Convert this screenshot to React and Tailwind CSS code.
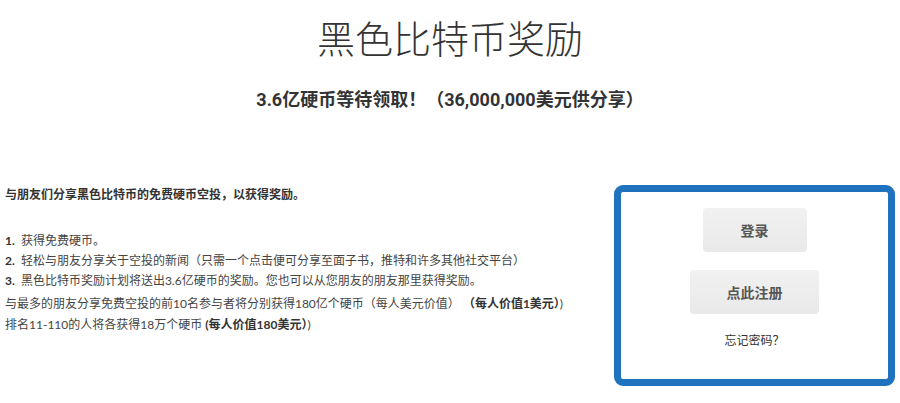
export default function App() {
  return (
    <div className="w-[900px] h-[403px] bg-white text-[#444] font-['Lato','Noto_Sans_CJK_SC',sans-serif] overflow-hidden">
      <h1 className="pt-[13px] text-center text-[38px] leading-[50px] font-light text-[#333]">黑色比特币奖励</h1>
      <h2 className="mt-[25px] text-center text-[18px] leading-[24px] font-bold text-[#333] font-['Roboto','Noto_Sans_CJK_SC',sans-serif]">
        3.6亿硬币等待领取！（36,000,000美元供分享）
      </h2>

      <div className="mt-[73px] flex justify-between pl-[5px] pr-[5px]">
        <div className="pt-[3px] text-[12px]">
          <p className="font-bold text-[#333] leading-[14px]">与朋友们分享黑色比特币的免费硬币空投，以获得奖励。</p>
          <div className="mt-[29px] leading-[20px]">
            <p><b className="text-[#333] mr-[3px]">1.</b> 获得免费硬币。</p>
            <p><b className="text-[#333] mr-[3px]">2.</b> 轻松与朋友分享关于空投的新闻（只需一个点击便可分享至面子书，推特和许多其他社交平台）</p>
            <p><b className="text-[#333] mr-[3px]">3.</b> 黑色比特币奖励计划将送出3.6亿硬币的奖励。您也可以从您朋友的朋友那里获得奖励。</p>
          </div>
          <div className="mt-[2px] leading-[21px]">
            <p>与最多的朋友分享免费空投的前10名参与者将分别获得180亿个硬币（每人美元价值） <b className="text-[#333]">（每人价值1美元）</b>)</p>
            <p>排名11-110的人将各获得18万个硬币 <b className="text-[#333]">(每人价值180美元）</b>)</p>
          </div>
        </div>

        <div className="w-[281px] h-[201px] shrink-0 border-[7px] border-[#1f73be] rounded-[9px] flex flex-col items-center pt-[16px]">
          <button className="w-[104px] h-[44px] rounded-[4px] bg-gradient-to-b from-[#f1f1f1] to-[#e9e9e9] text-[14px] font-bold text-[#555]">登录</button>
          <button className="mt-[18px] w-[129px] h-[44px] rounded-[4px] bg-gradient-to-b from-[#f1f1f1] to-[#e9e9e9] text-[14px] font-bold text-[#555]">点此注册</button>
          <a className="mt-[18px] text-[12px] leading-[18px] text-[#333]">忘记密码？</a>
        </div>
      </div>
    </div>
  )
}
